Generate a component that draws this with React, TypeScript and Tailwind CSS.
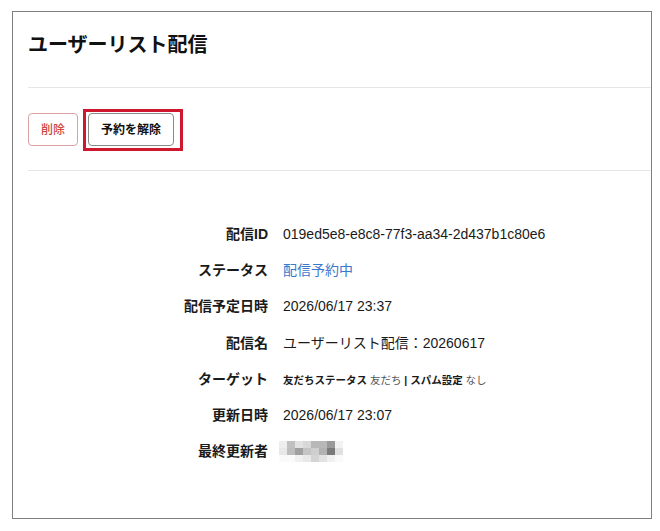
const pixels = [
  ["#eeeeee", "#c0c0c0", "#e2e2e2", "#d8d8d8", "#b8b8b8", "#b8b8b8", "#9a9a9a", "#f2f2f2"],
  ["#e8e8e8", "#bdbdbd", "#a0a0a0", "#c4c4c4", "#cfcfcf", "#b2b2b2", "#7a7a7a", "#e0e0e0"],
  ["#fafafa", "#fafafa", "#f0f0f0", "#e8e8e8", "#d4d4d4", "#e2e2e2", "#f0f0f0", "#fafafa"],
]

function Row({ label, children }: { label: string; children: React.ReactNode }) {
  return (
    <div className="flex items-center h-[36.3px]">
      <div className="w-[255px] text-right font-bold text-[14px] text-[#1a1a1a]">{label}</div>
      <div className="pl-[15px] text-[14px] text-[#1a1a1a]">{children}</div>
    </div>
  )
}

export default function App() {
  return (
    <div
      className="w-[660px] h-[531px] bg-white pt-[11px] pl-[12px]"
      style={{ fontFamily: '"Liberation Sans", "Noto Sans CJK JP", sans-serif' }}
    >
      <div className="w-[640px] h-[508px] border border-[#808080]">

        {/* タイトル */}
        <div className="pl-[15px] pt-[19px] pb-[28px]">
          <h1 className="text-[20px] leading-[28px] font-bold text-[#111]">ユーザーリスト配信</h1>
        </div>

        {/* 操作ボタン */}
        <div className="ml-[15px] border-t border-[#e6e6e6] pt-[21px] pb-[19px]">
          <div className="flex items-start gap-[5px]">
            <button className="mt-[4px] h-[33px] w-[50px] rounded-[4px] border border-[#d9a3a3] text-[12px] font-medium text-[#cc4a42]">
              削除
            </button>
            <div className="border-[3px] border-[#cf1830] pl-[2px] pr-[6px] pt-[1px] pb-[2px]">
              <button className="h-[33px] w-[86px] rounded-[4px] border border-[#8a8a8a] text-[12px] font-bold text-[#111]">
                予約を解除
              </button>
            </div>
          </div>
        </div>

        {/* 詳細 */}
        <div className="ml-[15px] border-t border-[#e6e6e6] pt-[45px]">
          <div className="-ml-[15px]">
            <Row label="配信ID">019ed5e8-e8c8-77f3-aa34-2d437b1c80e6</Row>
            <Row label="ステータス">
              <span className="text-[#3b78cc]">配信予約中</span>
            </Row>
            <Row label="配信予定日時">2026/06/17 23:37</Row>
            <Row label="配信名">ユーザーリスト配信：20260617</Row>
            <Row label="ターゲット">
              <span className="text-[10.5px]">
                <span className="font-bold">友だちステータス</span>
                <span className="text-[#555]"> 友だち </span>
                <span className="font-bold">| </span>
                <span className="font-bold">スパム設定</span>
                <span className="text-[#555]"> なし</span>
              </span>
            </Row>
            <Row label="更新日時">2026/06/17 23:07</Row>
            <Row label="最終更新者">
              <div className="flex flex-col -ml-[4px]">
                {pixels.map((r, i) => (
                  <div key={i} className="flex">
                    {r.map((c, j) => (
                      <div key={j} className="w-[8px] h-[7px]" style={{ backgroundColor: c }} />
                    ))}
                  </div>
                ))}
              </div>
            </Row>
          </div>
        </div>

      </div>
    </div>
  )
}
